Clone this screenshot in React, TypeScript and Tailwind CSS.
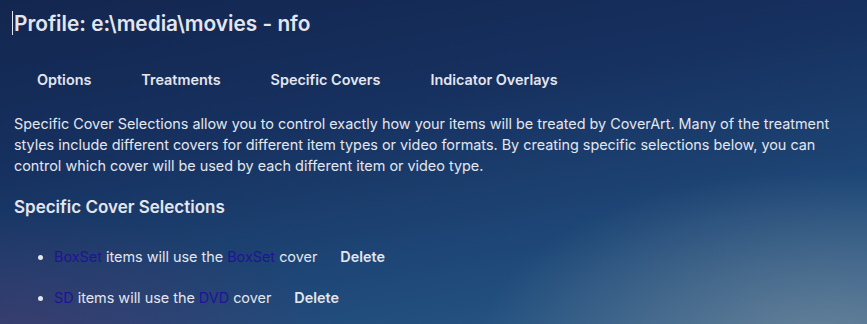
export default function App() {
  const tabs = ["Options", "Treatments", "Specific Covers", "Indicator Overlays"];
  return (
    <div className="w-[867px] h-[324px] overflow-hidden text-[#e4e6ee] font-['Inter',sans-serif] bg-[radial-gradient(ellipse_40%_55%_at_95%_108%,rgba(125,145,160,0.75),transparent),radial-gradient(ellipse_40%_45%_at_0%_110%,rgba(75,55,105,0.7),transparent),linear-gradient(170deg,#13264f_0%,#16305f_35%,#1f4a7a_75%,#2a5a88_100%)]">
      <div className="pl-[14px] pt-[10px]">
        <h1 className="relative text-[20.8px] font-semibold leading-[28px] h-[28px]">
          <span className="absolute left-[-2px] top-[1px] w-px h-[24px] bg-[#e4e6ee]" />
          Profile: e:\media\movies - nfo
        </h1>
        <div className="flex mt-[32px] ml-[-2px]">
          {tabs.map((t) => (
            <div key={t} className="px-[25px] text-[14.4px] font-semibold leading-[20px]">
              {t}
            </div>
          ))}
        </div>
        <p className="mt-[23px] text-[14.4px] leading-[21px] pr-[20px]">
          Specific Cover Selections allow you to control exactly how your items will be treated by CoverArt. Many of the treatment styles include different covers for different item types or video formats. By creating specific selections below, you can control which cover will be used by each different item or video type.
        </p>
        <h2 className="mt-[19px] text-[17px] font-semibold leading-[24px]">Specific Cover Selections</h2>
        <ul className="list-disc pl-[40px] mt-[28px] text-[14.4px] leading-[20px]">
          <li className="mb-[21px]">
            <span className="text-[#1f1497]">BoxSet</span> items will use the{" "}
            <span className="text-[#1f1497]">BoxSet</span> cover
            <span className="ml-[23px] font-semibold">Delete</span>
          </li>
          <li>
            <span className="text-[#1f1497]">SD</span> items will use the{" "}
            <span className="text-[#1f1497]">DVD</span> cover
            <span className="ml-[23px] font-semibold">Delete</span>
          </li>
        </ul>
      </div>
    </div>
  );
}
